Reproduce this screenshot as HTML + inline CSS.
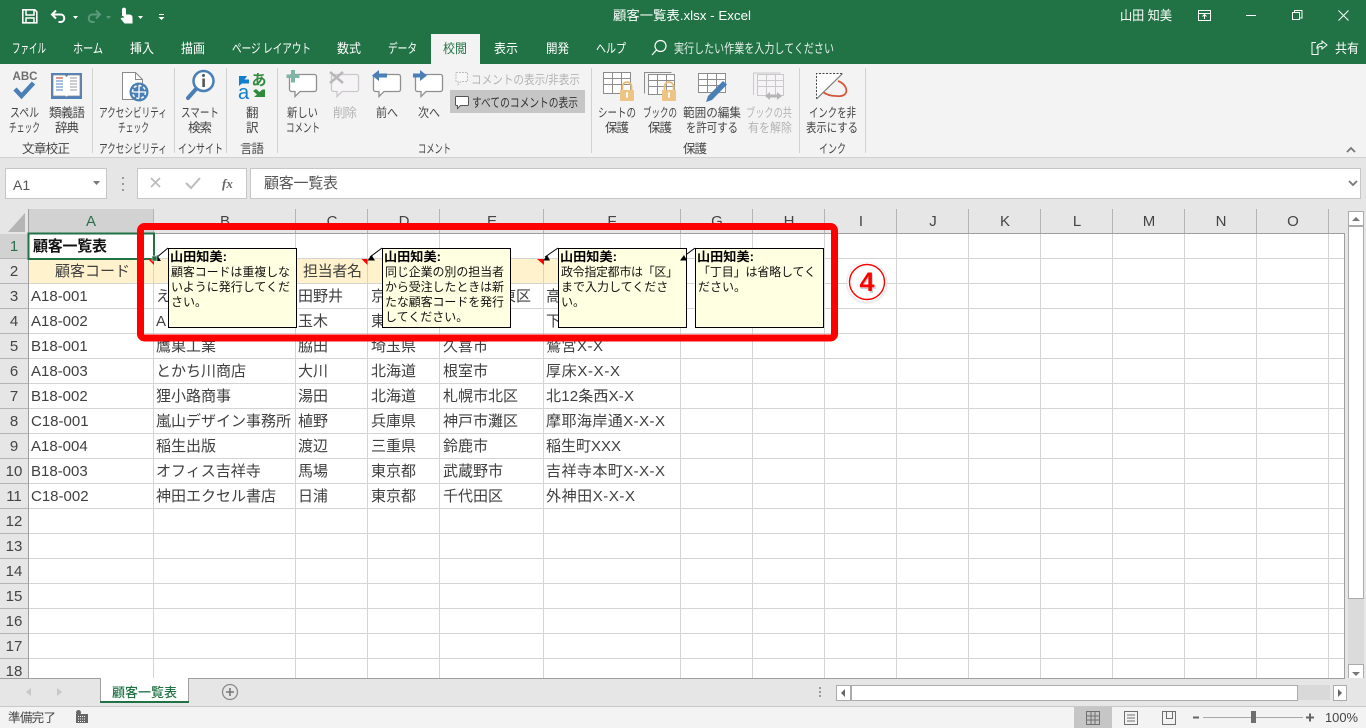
<!DOCTYPE html>
<html lang="ja"><head><meta charset="utf-8"><title>顧客一覧表.xlsx - Excel</title>
<style>
html,body{margin:0;padding:0;background:#fff;width:1366px;height:728px;overflow:hidden}
svg{display:block;position:absolute;left:0;top:0}
text{font-family:"Liberation Sans","Noto Sans CJK JP",sans-serif}
.t{font-size:13px;fill:#fff}
.r{font-size:12.500px;fill:#444}
.d{font-size:12.500px;fill:#b4b4b4}
.c{font-size:15px;fill:#404040}
.h{font-size:15px;fill:#444;text-anchor:middle}
.n{font-size:12px;fill:#111}
.b{font-size:12.500px;fill:#000;font-weight:bold}
</style></head><body>
<svg width="1366" height="728" viewBox="0 0 1366 728">
<!-- backgrounds -->
<rect width="1366" height="728" fill="#fff"/>
<rect width="1366" height="64" fill="#217346"/>
<rect y="64" width="1366" height="93" fill="#f3f3f3"/>
<rect y="157" width="1366" height="52" fill="#e6e6e6"/>
<rect y="157" width="1366" height="1" fill="#d0d0d0"/>
<rect x="431" y="34" width="49" height="30" fill="#f3f3f3"/>

<!-- QAT -->
<g fill="none" stroke="#fff" stroke-width="1.600">
<path d="M22.800 9.800h12l2 2v11h-14z"/><path d="M26 10v5h8v-5M26 22.500v-4.500h8v4.500" stroke-width="1.500"/>
<path d="M56 10.500l-4 4 4 4M52.500 14.500h8c5 0 5 7.500 0 7.500h-2" stroke-width="2"/>
</g>
<path d="M73 16h5l-2.500 3z" fill="#fff"/>
<g fill="none" stroke="#5a9a7a" stroke-width="2"><path d="M96 10.500l4 4-4 4M99.500 14.500h-7c-5 0-5 7.500 0 7.500h2"/></g>
<path d="M106 16h5l-2.500 3z" fill="#5a9a7a"/>
<path d="M122 9.500c0-2.500 4-2.500 4 0v5h3c2 0 3.500 1 3.500 3v6h-8l-4-5 2-1 1 1v-2.500h-1.500z" fill="#fff"/>
<path d="M138 16h5l-2.500 3z" fill="#fff"/>
<path d="M159 14h5v1h-5zM158.500 17h6l-3 3z" fill="#fff"/>

<!-- title bar -->
<text class="t" x="613" y="20" textLength="138" lengthAdjust="spacingAndGlyphs">顧客一覧表.xlsx  -  Excel</text>
<text class="t" x="1120" y="20" textLength="52" lengthAdjust="spacingAndGlyphs">山田 知美</text>
<g fill="none" stroke="#fff" stroke-width="1">
<rect x="1198.500" y="10.500" width="12" height="10"/><path d="M1198.500 13.500h12M1204.500 19v-4M1202.500 16.500l2-2 2 2"/>
<path d="M1246 15.500h10"/>
<rect x="1292.500" y="12.500" width="7" height="7"/><path d="M1294.500 12.500v-2h7.500v7.500h-2"/>
<path d="M1338.500 10.500l10 10M1348.500 10.500l-10 10"/>
</g>

<!-- tabs -->
<g>
<text class="t" x="12" y="53" textLength="34" lengthAdjust="spacingAndGlyphs">ファイル</text>
<text class="t" x="73" y="53" textLength="30" lengthAdjust="spacingAndGlyphs">ホーム</text>
<text class="t" x="130" y="53" textLength="24" lengthAdjust="spacingAndGlyphs">挿入</text>
<text class="t" x="181" y="53" textLength="24" lengthAdjust="spacingAndGlyphs">描画</text>
<text class="t" x="232" y="53" textLength="79" lengthAdjust="spacingAndGlyphs">ページ レイアウト</text>
<text class="t" x="337" y="53" textLength="24" lengthAdjust="spacingAndGlyphs">数式</text>
<text class="t" x="388" y="53" textLength="29" lengthAdjust="spacingAndGlyphs">データ</text>
<text class="t" x="443" y="53" textLength="24" lengthAdjust="spacingAndGlyphs" style="fill:#217346">校閲</text>
<text class="t" x="494" y="53" textLength="24" lengthAdjust="spacingAndGlyphs">表示</text>
<text class="t" x="546" y="53" textLength="23" lengthAdjust="spacingAndGlyphs">開発</text>
<text class="t" x="596" y="53" textLength="30" lengthAdjust="spacingAndGlyphs">ヘルプ</text>
<text class="t" x="674" y="53" textLength="160" lengthAdjust="spacingAndGlyphs" style="fill:#e4efe9">実行したい作業を入力してください</text>
<text class="t" x="1335" y="53" textLength="24" lengthAdjust="spacingAndGlyphs">共有</text>
</g>
<g fill="none" stroke="#fff" stroke-width="1.200">
<circle cx="660.500" cy="46" r="5.500"/><path d="M656.500 50l-4.500 5"/>
<path d="M1318 47v7.500h-5.500h-0.500v-12h4M1317 48c0-3 2-4.500 5-4.500v-2.500l5 4-5 4v-2.500c-2 0-4 .5-5 1.500z" stroke-width="1"/>
</g>

<!-- ribbon separators -->
<g fill="#d2d2d2">
<rect x="92" y="68" width="1" height="85"/><rect x="174" y="68" width="1" height="85"/>
<rect x="226" y="68" width="1" height="85"/><rect x="277" y="68" width="1" height="85"/>
<rect x="591" y="68" width="1" height="85"/><rect x="799" y="68" width="1" height="85"/>
<rect x="865" y="68" width="1" height="85"/>
</g>

<!-- ribbon icons -->
<text x="12.500" y="80" font-size="12" font-weight="bold" fill="#6f6f6f" textLength="25" lengthAdjust="spacingAndGlyphs">ABC</text>
<path d="M15 89l6.500 7 12-13" fill="none" stroke="#4a7fb5" stroke-width="4.500"/>

<rect x="51" y="73" width="31" height="26" fill="#4f81bd"/>
<path d="M53 75h12l1.500 1.500 1.500-1.500h12v21h-12l-1.500 1-1.500-1h-12z" fill="#fff" stroke="#8a8a8a" stroke-width=".8"/>
<path d="M56 78h7" stroke="#d0504a" stroke-width="1.200"/><path d="M56 81h7M56 84h7M56 87h7M56 90h7" stroke="#4f81bd" stroke-width="1"/>
<path d="M70 78h7M70 81h7M70 84h7M70 87h7M70 90h7" stroke="#9a9a9a" stroke-width="1"/>

<path d="M122.500 72.500h13l7 7v20h-20z" fill="#fff" stroke="#8a8a8a"/><path d="M135.500 72.500v7h7" fill="none" stroke="#8a8a8a"/>
<circle cx="139" cy="92" r="9.500" fill="#4a7fb5"/>
<circle cx="139" cy="92" r="6.500" fill="none" stroke="#fff" stroke-width="1.500" stroke-dasharray="3 2"/>
<path d="M139 86v12M133 92h12" stroke="#fff" stroke-width="1.300"/>

<circle cx="203.500" cy="81" r="10" fill="#fff" stroke="#4a7fb5" stroke-width="2.500"/>
<path d="M196 89l-8 9" stroke="#4a7fb5" stroke-width="4" stroke-linecap="round"/>
<circle cx="203.500" cy="75.500" r="1.500" fill="#555"/><rect x="202.300" y="78.500" width="2.600" height="8.500" fill="#555"/>

<text x="251.500" y="85" font-size="15" font-weight="bold" fill="#2e8b3d">あ</text>
<text x="238" y="99" font-size="20" fill="#0f7fd0">a</text>
<path d="M239 76l0 10 3-2.500h7v-4h-4.500l2.500-3.500z" fill="#0f7fd0"/>
<path d="M265 97h-11l3-2.500-4-3.500 3-2 3.500 3 3-2.500h2.500z" fill="#2e8b3d"/>

<g stroke-width="1.300" fill="#fff">
<path d="M291.500 74.500h23a2 2 0 0 1 2 2v13a2 2 0 0 1-2 2h-14.500l-5 5v-5h-3.500a2 2 0 0 1-2-2v-13a2 2 0 0 1 2-2z" stroke="#8f8f8f"/>
<path d="M333.500 74.500h23a2 2 0 0 1 2 2v13a2 2 0 0 1-2 2h-14.500l-5 5v-5h-3.500a2 2 0 0 1-2-2v-13a2 2 0 0 1 2-2z" stroke="#c9c9c9" fill="#f7f4f7"/>
<path d="M375.500 74.500h23a2 2 0 0 1 2 2v13a2 2 0 0 1-2 2h-14.500l-5 5v-5h-3.500a2 2 0 0 1-2-2v-13a2 2 0 0 1 2-2z" stroke="#8f8f8f"/>
<path d="M417.500 74.500h23a2 2 0 0 1 2 2v13a2 2 0 0 1-2 2h-14.500l-5 5v-5h-3.500a2 2 0 0 1-2-2v-13a2 2 0 0 1 2-2z" stroke="#8f8f8f"/>
</g>
<path d="M291 70h4v4.500h4.500v3.500h-4.500v4.500h-4v-4.500h-4.500v-3.500h4.500z" fill="#7fb5a5"/>
<path d="M330 72l13 11M343 72l-13 11" stroke="#b8b8b8" stroke-width="2.500"/>
<path d="M372 75.500l7-5.500v3.500h8v4h-8v3.500z" fill="#4a7fb5"/>
<path d="M427 75.500l-7-5.500v3.500h-7v4h7v3.500z" fill="#4a7fb5"/>

<path d="M456 72.500h11.500v9h-6.500l-3 3v-3h-2z" fill="#f7f7f7" stroke="#bdbdbd" stroke-dasharray="2 1"/>
<rect x="450" y="90" width="135" height="23" fill="#c6c6c6"/>
<path d="M456.500 96.500h11a1 1 0 0 1 1 1v7a1 1 0 0 1-1 1h-7l-3 3v-3h-1a1 1 0 0 1-1-1v-7a1 1 0 0 1 1-1z" fill="#fff" stroke="#555"/>

<!-- protect icons -->
<g fill="#fff" stroke="#8c8c8c">
<rect x="603.500" y="72.500" width="27" height="21"/>
<path d="M603.500 78.500h27M603.500 84.500h27M612.500 72.500v21M621.500 72.500v21" fill="none"/>
<rect x="648.500" y="74.500" width="26" height="20"/>
<path d="M644.500 93.500v-21h27" fill="none"/>
<path d="M648.500 80.500h26M648.500 86.500h26M657.500 74.500v20M666.500 74.500v20" fill="none"/>
<rect x="698.500" y="73.500" width="27" height="19"/>
<path d="M698.500 79.500h27M698.500 85.500h27M707.500 73.500v19M716.500 73.500v19" fill="none"/>
</g>
<g stroke="#c9c9c9" fill="#f7f4f7">
<rect x="757.500" y="74.500" width="26" height="21"/><path d="M753.500 95v-22h27" fill="none"/>
<path d="M757.500 80.500h26M757.500 86.500h26M766.500 74.500v21M775.500 74.500v21" fill="none"/>
</g>
<path d="M765 96l5-4v2.500h7v-2.500l5 4-5 4v-2.500h-7v2.500z" fill="#b5b5b5"/>
<g>
<path d="M622.500 90v-3.500a4.500 4.500 0 0 1 9 0v3.500" fill="none" stroke="#e8bd78" stroke-width="1.800"/>
<rect x="620" y="90" width="14" height="11" rx="1" fill="#edc483"/><rect x="626" y="92.500" width="2" height="5" fill="#fff"/>
<path d="M664.500 90v-3.500a4.500 4.500 0 0 1 9 0v3.500" fill="none" stroke="#e8bd78" stroke-width="1.800"/>
<rect x="662" y="90" width="14" height="11" rx="1" fill="#edc483"/><rect x="668" y="92.500" width="2" height="5" fill="#fff"/>
</g>
<path d="M706 102l2-6 15-15 4 3.500-15 15.500z" fill="#4a7fb5"/>

<path d="M816.500 99V73.500h26z" fill="#fff"/>
<path d="M816.500 99V73.500h26" fill="none" stroke="#444" stroke-dasharray="2 1.500"/>
<path d="M816.500 99l26-25.500" stroke="#777" stroke-width="1.200"/>
<path d="M838 81c11 4 12 17-2 15-5 0-9-1-13-4" fill="none" stroke="#d8553a" stroke-width="1.800"/>

<!-- ribbon labels -->
<text class="r" x="10" y="117" textLength="29" lengthAdjust="spacingAndGlyphs">スペル</text>
<text class="r" x="9" y="132" textLength="31" lengthAdjust="spacingAndGlyphs">チェック</text>
<text class="r" x="49" y="117" textLength="36">類義語</text>
<text class="r" x="55" y="132" textLength="24">辞典</text>
<text class="r" x="99" y="117" textLength="68" lengthAdjust="spacingAndGlyphs">アクセシビリティ</text>
<text class="r" x="118" y="132" textLength="31" lengthAdjust="spacingAndGlyphs">チェック</text>
<text class="r" x="181" y="117" textLength="38" lengthAdjust="spacingAndGlyphs">スマート</text>
<text class="r" x="188" y="132" textLength="24">検索</text>
<text class="r" x="246" y="117">翻</text>
<text class="r" x="246" y="132">訳</text>
<text class="r" x="287" y="117" textLength="31" lengthAdjust="spacingAndGlyphs">新しい</text>
<text class="r" x="286" y="132" textLength="34" lengthAdjust="spacingAndGlyphs">コメント</text>
<text class="d" x="333" y="117" textLength="24">削除</text>
<text class="r" x="376" y="117" textLength="22" lengthAdjust="spacingAndGlyphs">前へ</text>
<text class="r" x="418" y="117" textLength="22" lengthAdjust="spacingAndGlyphs">次へ</text>
<text class="d" x="471" y="84" textLength="109" lengthAdjust="spacingAndGlyphs">コメントの表示/非表示</text>
<text class="r" x="472" y="107" textLength="106" lengthAdjust="spacingAndGlyphs" style="fill:#333">すべてのコメントの表示</text>
<text class="r" x="598" y="117" textLength="38" lengthAdjust="spacingAndGlyphs">シートの</text>
<text class="r" x="605" y="132" textLength="24">保護</text>
<text class="r" x="643" y="117" textLength="34" lengthAdjust="spacingAndGlyphs">ブックの</text>
<text class="r" x="648" y="132" textLength="24">保護</text>
<text class="r" x="683" y="117" textLength="58" lengthAdjust="spacingAndGlyphs">範囲の編集</text>
<text class="r" x="686" y="132" textLength="52" lengthAdjust="spacingAndGlyphs">を許可する</text>
<text class="d" x="746" y="117" textLength="46" lengthAdjust="spacingAndGlyphs">ブックの共</text>
<text class="d" x="748" y="132" textLength="44" lengthAdjust="spacingAndGlyphs">有を解除</text>
<text class="r" x="809" y="117" textLength="47" lengthAdjust="spacingAndGlyphs">インクを非</text>
<text class="r" x="806" y="132" textLength="52" lengthAdjust="spacingAndGlyphs">表示にする</text>
<text class="r" x="22" y="153" textLength="48">文章校正</text>
<text class="r" x="99" y="153" textLength="68" lengthAdjust="spacingAndGlyphs">アクセシビリティ</text>
<text class="r" x="178" y="153" textLength="45" lengthAdjust="spacingAndGlyphs">インサイト</text>
<text class="r" x="240" y="153" textLength="24">言語</text>
<text class="r" x="418" y="153" textLength="33" lengthAdjust="spacingAndGlyphs">コメント</text>
<text class="r" x="683" y="153" textLength="24">保護</text>
<text class="r" x="819" y="153" textLength="27" lengthAdjust="spacingAndGlyphs">インク</text>
<path d="M1347 152l4-4 4 4" fill="none" stroke="#777" stroke-width="1.800"/>

<!-- formula bar -->
<rect x="5.500" y="168.500" width="101" height="30" fill="#fff" stroke="#c6c6c6"/>
<text x="13" y="190" font-size="14" fill="#555">A1</text>
<path d="M93 181h7l-3.500 4z" fill="#777"/>
<path d="M122 177h2v2h-2zM122 183h2v2h-2zM122 189h2v2h-2z" fill="#999"/>
<rect x="137.500" y="168.500" width="109" height="30" fill="#fff" stroke="#c6c6c6"/>
<path d="M151 178l9 9M160 178l-9 9" stroke="#bdbdbd" stroke-width="1.800"/>
<path d="M186 183l5 5 9-10" fill="none" stroke="#bdbdbd" stroke-width="2"/>
<text x="222" y="188" font-size="13" font-style="italic" font-weight="bold" fill="#666" style="font-family:'Liberation Serif',serif">fx</text>
<rect x="250.500" y="168.500" width="1110" height="30" fill="#fff" stroke="#c6c6c6"/>
<text x="264" y="188" font-size="15" fill="#555" textLength="74">顧客一覧表</text>
<path d="M1349 181l4 4 4-4" fill="none" stroke="#777" stroke-width="1.800"/>

<!-- sheet headers -->
<rect y="209" width="1366" height="25" fill="#e6e6e6"/>
<rect y="209" width="29" height="469" fill="#e6e6e6"/>
<rect x="1345" y="209" width="21" height="469" fill="#e6e6e6"/>
<rect x="29" y="209" width="125" height="24" fill="#d2d2d2"/>
<rect y="234" width="28" height="25" fill="#d2d2d2"/>
<path d="M25 213v19H8z" fill="#b5b5b5"/>

<!-- row 2 fill -->
<rect x="29" y="259" width="652" height="24" fill="#fff2cc"/>

<!-- gridlines -->
<g stroke="#d4d4d4" stroke-width="1">
<path d="M29 258.500H1344M29 283.500H1344M29 308.500H1344M29 333.500H1344M29 358.500H1344M29 383.500H1344M29 408.500H1344M29 433.500H1344M29 458.500H1344M29 483.500H1344M29 508.500H1344M29 533.500H1344M29 558.500H1344M29 583.500H1344M29 608.500H1344M29 633.500H1344M29 658.500H1344"/>
<path d="M153.500 234V678M295.500 234V678M367.500 234V678M439.500 234V678M543.500 234V678M680.500 234V678M752.500 234V678M824.500 234V678M896.500 234V678M968.500 234V678M1040.500 234V678M1112.500 234V678M1184.500 234V678M1256.500 234V678M1328.500 234V678"/>
</g>
<g stroke="#b4b4b4" stroke-width="1">
<path d="M153.500 209V233M295.500 209V233M367.500 209V233M439.500 209V233M543.500 209V233M680.500 209V233M752.500 209V233M824.500 209V233M896.500 209V233M968.500 209V233M1040.500 209V233M1112.500 209V233M1184.500 209V233M1256.500 209V233M1328.500 209V233"/>
<path d="M0 258.500H28M0 283.500H28M0 308.500H28M0 333.500H28M0 358.500H28M0 383.500H28M0 408.500H28M0 433.500H28M0 458.500H28M0 483.500H28M0 508.500H28M0 533.500H28M0 558.500H28M0 583.500H28M0 608.500H28M0 633.500H28M0 658.500H28"/>
</g>
<path d="M28.500 209V678M28 233.500H1344.500V678" fill="none" stroke="#9f9f9f"/>

<!-- column letters -->
<text class="h" x="91" y="226" style="fill:#2a6f4c">A</text>
<text class="h" x="225" y="226">B</text><text class="h" x="332" y="226">C</text><text class="h" x="404" y="226">D</text>
<text class="h" x="492" y="226">E</text><text class="h" x="612" y="226">F</text><text class="h" x="717" y="226">G</text>
<text class="h" x="789" y="226">H</text><text class="h" x="861" y="226">I</text><text class="h" x="933" y="226">J</text>
<text class="h" x="1005" y="226">K</text><text class="h" x="1077" y="226">L</text><text class="h" x="1149" y="226">M</text>
<text class="h" x="1221" y="226">N</text><text class="h" x="1293" y="226">O</text>

<!-- row numbers -->
<text class="h" x="14" y="251" style="fill:#2a6f4c">1</text>
<text class="h" x="14" y="276">2</text><text class="h" x="14" y="301">3</text><text class="h" x="14" y="326">4</text>
<text class="h" x="14" y="351">5</text><text class="h" x="14" y="376">6</text><text class="h" x="14" y="401">7</text>
<text class="h" x="14" y="426">8</text><text class="h" x="14" y="451">9</text><text class="h" x="14" y="476">10</text>
<text class="h" x="14" y="501">11</text><text class="h" x="14" y="526">12</text><text class="h" x="14" y="551">13</text>
<text class="h" x="14" y="576">14</text><text class="h" x="14" y="601">15</text><text class="h" x="14" y="626">16</text>
<text class="h" x="14" y="651">17</text><text class="h" x="14" y="676">18</text>

<!-- cells -->
<text class="c" x="33" y="251" font-weight="bold" style="fill:#111" textLength="74">顧客一覧表</text>
<text class="c" x="55" y="276" textLength="75">顧客コード</text>
<text class="c" x="303" y="276" textLength="59">担当者名</text>

<text class="c" x="31" y="301">A18-001</text><text class="c" x="156" y="301">え</text><text class="c" x="298" y="301">田野井</text><text class="c" x="371" y="301">京</text><text class="c" x="501" y="301">東区</text><text class="c" x="546" y="301">高</text>
<text class="c" x="31" y="326">A18-002</text><text class="c" x="156" y="326">A</text><text class="c" x="298" y="326">玉木</text><text class="c" x="371" y="326">東</text><text class="c" x="546" y="326">下</text>
<text class="c" x="31" y="351">B18-001</text><text class="c" x="156" y="351">鷹巣工業</text><text class="c" x="298" y="351">脇田</text><text class="c" x="371" y="351">埼玉県</text><text class="c" x="443" y="351">久喜市</text><text class="c" x="546" y="351" textLength="57">鷲宮X-X</text>
<text class="c" x="31" y="376">A18-003</text><text class="c" x="156" y="376">とかち川商店</text><text class="c" x="298" y="376">大川</text><text class="c" x="371" y="376">北海道</text><text class="c" x="443" y="376">根室市</text><text class="c" x="546" y="376" textLength="74">厚床X-X-X</text>
<text class="c" x="31" y="401">B18-002</text><text class="c" x="156" y="401">狸小路商事</text><text class="c" x="298" y="401">湯田</text><text class="c" x="371" y="401">北海道</text><text class="c" x="443" y="401">札幌市北区</text><text class="c" x="546" y="401" textLength="88">北12条西X-X</text>
<text class="c" x="31" y="426">C18-001</text><text class="c" x="156" y="426">嵐山デザイン事務所</text><text class="c" x="298" y="426">植野</text><text class="c" x="371" y="426">兵庫県</text><text class="c" x="443" y="426">神戸市灘区</text><text class="c" x="546" y="426" textLength="119">摩耶海岸通X-X-X</text>
<text class="c" x="31" y="451">A18-004</text><text class="c" x="156" y="451">稲生出版</text><text class="c" x="298" y="451">渡辺</text><text class="c" x="371" y="451">三重県</text><text class="c" x="443" y="451">鈴鹿市</text><text class="c" x="546" y="451" textLength="75">稲生町XXX</text>
<text class="c" x="31" y="476">B18-003</text><text class="c" x="156" y="476">オフィス吉祥寺</text><text class="c" x="298" y="476">馬場</text><text class="c" x="371" y="476">東京都</text><text class="c" x="443" y="476">武蔵野市</text><text class="c" x="546" y="476" textLength="119">吉祥寺本町X-X-X</text>
<text class="c" x="31" y="501">C18-002</text><text class="c" x="156" y="501">神田エクセル書店</text><text class="c" x="298" y="501">日浦</text><text class="c" x="371" y="501">東京都</text><text class="c" x="443" y="501">千代田区</text><text class="c" x="546" y="501" textLength="89">外神田X-X-X</text>

<!-- selection -->
<rect x="28.500" y="233.500" width="125.500" height="25.500" fill="none" stroke="#217346" stroke-width="2"/>

<!-- comment markers -->
<path d="M148 259h6v6z" fill="#f00"/><path d="M361.500 259h6v6z" fill="#f00"/><path d="M537 259h7v6z" fill="#f00"/>

<!-- comment connectors -->
<g stroke="#000" stroke-width="1">
<path d="M168 248l-12 10M382 248l-12 9M558 248l-13 9M695 248l-12 9" fill="none"/>
</g>

<!-- comment boxes -->
<g fill="#ffffe1" stroke="#000">
<rect x="168.500" y="248.500" width="128" height="79"/>
<rect x="382.500" y="248.500" width="128" height="79"/>
<rect x="558.500" y="248.500" width="128" height="79"/>
<rect x="695.500" y="248.500" width="128" height="79"/>
</g>
<g fill="#000">
<path d="M152 261l5-6 4 6z"/><path d="M367.500 260.500l4-5.500 3.500 5.500z"/><path d="M543.500 260.500l3.500-5.500 3 5.500z"/><path d="M680 260.500l4-5.500 3 5.500z"/>
</g>
<rect x="152" y="256" width="5" height="5" fill="#217346" stroke="#fff" stroke-width=".5"/>

<text class="b" x="170" y="261" textLength="57" lengthAdjust="spacingAndGlyphs">山田知美:</text>
<text class="n" x="171" y="276" textLength="119">顧客コードは重複しな</text>
<text class="n" x="171" y="291" textLength="119">いように発行してくだ</text>
<text class="n" x="171" y="306">さい。</text>

<text class="b" x="384" y="261" textLength="57" lengthAdjust="spacingAndGlyphs">山田知美:</text>
<text class="n" x="385" y="276" textLength="119">同じ企業の別の担当者</text>
<text class="n" x="385" y="291" textLength="119">から受注したときは新</text>
<text class="n" x="385" y="306" textLength="119">たな顧客コードを発行</text>
<text class="n" x="385" y="321">してください。</text>

<text class="b" x="560" y="261" textLength="57" lengthAdjust="spacingAndGlyphs">山田知美:</text>
<text class="n" x="561" y="276" textLength="117">政令指定都市は「区」</text>
<text class="n" x="561" y="291">まで入力してくださ</text>
<text class="n" x="561" y="306">い。</text>

<text class="b" x="697" y="261" textLength="57" lengthAdjust="spacingAndGlyphs">山田知美:</text>
<text class="n" x="698" y="276" textLength="118">「丁目」は省略してく</text>
<text class="n" x="698" y="291">ださい。</text>

<!-- red frame -->
<rect x="140.500" y="226.500" width="694" height="111.500" rx="4" fill="none" stroke="#f00" stroke-width="7"/>

<!-- circled 4 -->
<circle cx="867" cy="283" r="21" fill="#dedede" opacity=".55"/>
<circle cx="867" cy="282" r="19.500" fill="#fff"/>
<circle cx="867" cy="282" r="17.500" fill="#fff" stroke="#f00" stroke-width="1.400"/>
<text x="868" y="293" font-size="28" font-weight="bold" fill="#d0d0d0" text-anchor="middle">4</text>
<text x="867" y="291" font-size="27" font-weight="bold" fill="#f00" text-anchor="middle">4</text>

<!-- vertical scrollbar -->
<rect x="1345" y="209" width="21" height="469" fill="#e6e6e6"/>
<rect x="1348" y="226" width="16" height="438" fill="#dbdbdb"/>
<rect x="1348.500" y="226.500" width="15" height="372" fill="#fff" stroke="#ababab"/>
<rect x="1348.500" y="211.500" width="15" height="14" fill="#fff" stroke="#ababab"/>
<path d="M1352 221l4-4 4 4z" fill="#777"/>
<rect x="1348.500" y="664.500" width="15" height="14" fill="#fff" stroke="#ababab"/>
<path d="M1352 672l4 4 4-4z" fill="#777"/>

<!-- sheet bar -->
<rect y="678" width="1366" height="28" fill="#e6e6e6"/>
<rect y="678" width="1345" height="1" fill="#9f9f9f"/>
<rect y="706" width="1366" height="22" fill="#f3f3f3"/>
<rect y="706" width="1366" height="1" fill="#c8c8c8"/>
<path d="M31 688v8l-5-4zM57 688v8l5-4z" fill="#c8c8c8"/>
<rect x="100" y="678" width="88.500" height="24" fill="#fff"/>
<path d="M100.500 678v24M188.500 678v24" stroke="#9f9f9f"/>
<rect x="100" y="701" width="89" height="2" fill="#217346"/>
<text x="112" y="697" font-size="13" textLength="65" font-weight="500" fill="#217346">顧客一覧表</text>
<circle cx="230" cy="692" r="7.500" fill="none" stroke="#8a8a8a" stroke-width="1.300"/>
<path d="M230 688v8M226 692h8" stroke="#777" stroke-width="1.600"/>
<path d="M819 687h2v2h-2zM819 691h2v2h-2zM819 695h2v2h-2z" fill="#999"/>
<rect x="1298" y="685" width="32" height="15" fill="#d9d9d9"/>
<rect x="836.500" y="685.500" width="14" height="15" fill="#fff" stroke="#ababab"/>
<path d="M841 693l4-4v8z" fill="#666"/>
<rect x="851.500" y="685.500" width="446" height="15" fill="#fff" stroke="#ababab"/>
<rect x="1333.500" y="685.500" width="13" height="15" fill="#fff" stroke="#ababab"/>
<path d="M1342 693l-4-4v8z" fill="#666"/>

<!-- status bar -->
<text x="8" y="722" font-size="12.500" fill="#444" textLength="48">準備完了</text>
<rect x="76" y="714" width="12" height="9" fill="#666"/><circle cx="78.500" cy="712.500" r="2.500" fill="#666"/>
<path d="M78 716.500h8M78 719h8M78 721.500h8" stroke="#f3f3f3" stroke-dasharray="1 1"/>
<rect x="1074" y="707" width="38" height="21" fill="#c6c6c6"/>
<g fill="none" stroke="#6f6f6f">
<path d="M1086.500 711.500h13v13h-13zM1086.500 716h13M1086.500 720h13M1091 711.500v13M1095 711.500v13"/>
<rect x="1124.500" y="711.500" width="13" height="13"/>
<path d="M1127 715h8M1127 718h8M1127 721h8"/>
<rect x="1162.500" y="711.500" width="13" height="13"/>
<path d="M1166.500 711.500v7h6v-7"/>
</g>
<rect x="1193" y="716.500" width="6" height="2" fill="#666"/>
<rect x="1203" y="717" width="100" height="1" fill="#a8a8a8"/>
<rect x="1251" y="711" width="5" height="12" fill="#6f6f6f"/>
<path d="M1306 717.500h8M1310 713.500v8" stroke="#666" stroke-width="2"/>
<text x="1325" y="722" font-size="13" fill="#444" textLength="33" lengthAdjust="spacingAndGlyphs">100%</text>
</svg>
</body></html>
